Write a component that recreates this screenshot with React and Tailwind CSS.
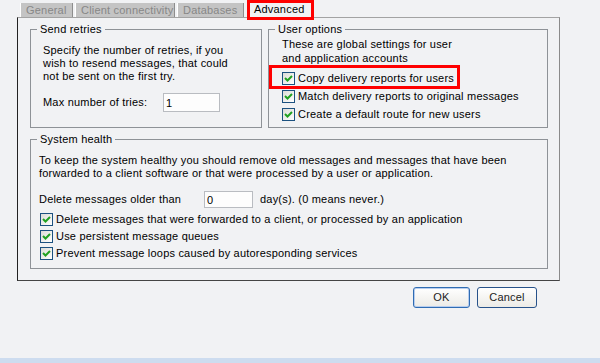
import { useState } from "react";

// XP-ish checkbox
function Check({ checked }) {
  return (
    <span className="w-[13px] h-[13px] shrink-0 border border-[#1c5180] bg-gradient-to-br from-[#dcdcd7] to-white flex items-center justify-center">
      {checked && (
        <svg width="9" height="9" viewBox="0 0 9 9">
          <polyline points="1,4 3.5,6.5 8,2" fill="none" stroke="#21a121" strokeWidth="2" />
        </svg>
      )}
    </span>
  );
}

function CheckRow({ label, h = "h-[18px]", children }) {
  const [on, setOn] = useState(true);
  return (
    <label className={`relative flex items-center gap-[3px] ${h} cursor-default`} onClick={() => setOn(!on)}>
      <Check checked={on} />
      <span className="whitespace-nowrap">{label}</span>
      {children}
    </label>
  );
}

function GroupBox({ title, className, children }) {
  return (
    <div className={`relative border border-[#8e9297] ${className}`}>
      <span className="absolute -top-[7px] left-[6px] px-[3px] leading-[13px] bg-[#f1f2f4] whitespace-nowrap">{title}</span>
      {children}
    </div>
  );
}

function Tab({ label, w }) {
  return (
    <div className={`${w} h-[14px] bg-[#c4c4c4] border-l border-l-white border-r border-r-[#8d8d8d] text-[#878787] pl-[5px] leading-[14px] whitespace-nowrap overflow-hidden`}>
      {label}
    </div>
  );
}

export default function App() {
  return (
    <div className="w-[600px] h-[363px] bg-[#f1f2f4] flex flex-col text-[11px] tracking-[0.2px] text-black font-['Liberation_Sans',Arial,sans-serif] overflow-hidden">
      {/* Tabs */}
      <div className="flex items-end h-[17px] pl-[20px] gap-[2px]">
        <Tab label="General" w="w-[53px]" />
        <Tab label="Client connectivity" w="w-[100px]" />
        <Tab label="Databases" w="w-[67px]" />
        <div className="relative z-10 ml-[1px] w-[67px] h-[20px] -mb-[3px] border-[3px] border-[#ff0000] bg-[#f1f2f4] pl-[4px] leading-[13px]">
          Advanced
        </div>
      </div>

      {/* Panel */}
      <div className="ml-[17px] w-[543px] h-[264px] border-l border-l-[#222] border-t border-t-[#a3a3a3] border-r border-r-[#8a8a8a] border-b border-b-[#444] pl-[12px] pt-[11px]">
        <div className="flex gap-[6px]">
          <GroupBox title="Send retries" className="w-[232px] h-[99px] pl-[12px] pt-[14px]">
            <div className="leading-[13px]">
              <div>Specify the number of retries, if you</div>
              <div>wish to resend messages, that could</div>
              <div>not be sent on the first try.</div>
            </div>
            <div className="flex items-center mt-[10px]">
              <span className="w-[120px]">Max number of tries:</span>
              <input
                defaultValue="1"
                className="w-[57px] h-[19px] border border-[#b9bcc1] bg-[#fdfdfd] px-[2px] text-[11px] outline-none"
              />
            </div>
          </GroupBox>

          <GroupBox title="User options" className="w-[280px] h-[99px] pl-[13px] pt-[7px]">
            <div className="leading-[14px]">
              <div>These are global settings for user</div>
              <div>and application accounts</div>
            </div>
            <div className="mt-[4px]">
              <CheckRow label="Copy delivery reports for users">
                <span className="absolute -left-[13px] -top-[4px] w-[191px] h-[24px] border-[3px] border-[#ff0000] pointer-events-none" />
              </CheckRow>
              <CheckRow label="Match delivery reports to original messages" />
              <CheckRow label="Create a default route for new users" />
            </div>
          </GroupBox>
        </div>

        <GroupBox title="System health" className="mt-[11px] w-[518px] h-[130px] pl-[8px] pt-[14px]">
          <div className="leading-[13px]">
            <div>To keep the system healthy you should remove old messages and messages that have been</div>
            <div>forwarded to a client software or that were processed by a user or application.</div>
          </div>
          <div className="flex items-center mt-[11px]">
            <span className="w-[165px]">Delete messages older than</span>
            <input
              defaultValue="0"
              className="w-[49px] h-[17px] border border-[#b9bcc1] bg-[#fdfdfd] px-[2px] text-[11px] outline-none"
            />
            <span className="ml-[7px]">day(s). (0 means never.)</span>
          </div>
          <div className="mt-[3px] pl-[1px]">
            <CheckRow h="h-[17px]" label="Delete messages that were forwarded to a client, or processed by an application" />
            <CheckRow h="h-[17px]" label="Use persistent message queues" />
            <CheckRow h="h-[17px]" label="Prevent message loops caused by autoresponding services" />
          </div>
        </GroupBox>
      </div>

      {/* Buttons */}
      <div className="flex justify-end gap-[7px] pr-[63px] mt-[6px]">
        <button className="w-[57px] h-[21px] rounded-[3px] border border-[#2f6cb3] bg-gradient-to-b from-white to-[#ecebe6] shadow-[inset_0_0_0_1px_#b7cdee] text-[#222]">
          OK
        </button>
        <button className="w-[60px] h-[21px] rounded-[3px] border border-[#27528a] bg-gradient-to-b from-white to-[#ecebe6] text-[#222]">
          Cancel
        </button>
      </div>

      <div className="mt-auto h-[5px] bg-[#cddcef]" />
    </div>
  );
}
